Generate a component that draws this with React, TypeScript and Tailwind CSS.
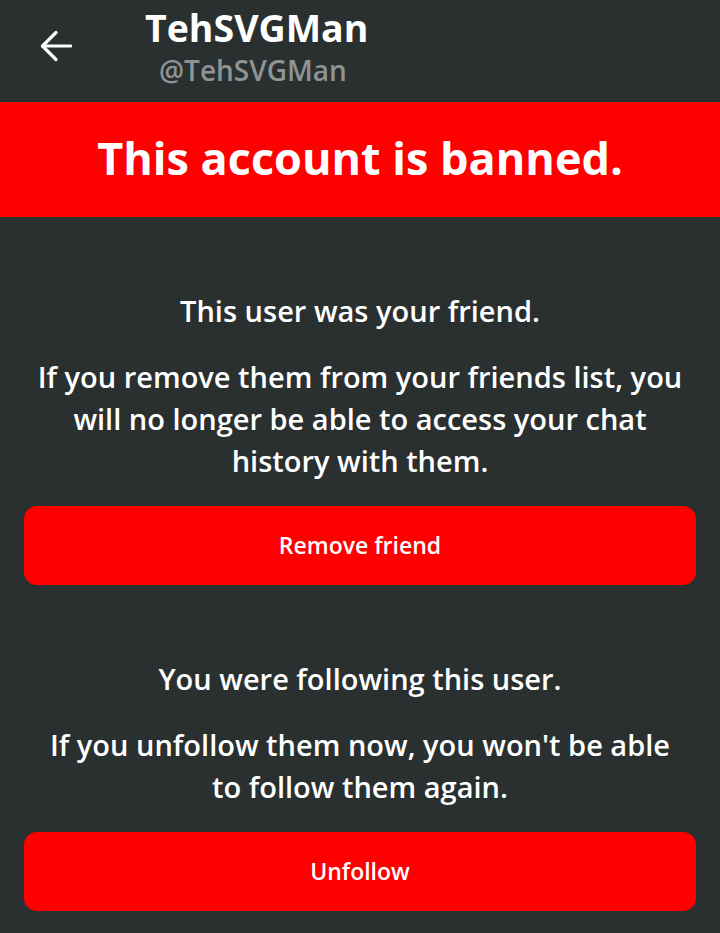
import React from "react";

export default function App() {
  return (
    <div className="w-[720px] h-[933px] bg-[#2a2f30] overflow-hidden" style={{ fontFamily: "'Open Sans', Lato, sans-serif" }}>
      <div className="h-[102px] flex items-start">
        <div className="w-[145px] pl-[40px] pt-[30px]">
          <svg width="32" height="32" viewBox="0 0 32 32" fill="none" stroke="white" strokeWidth="3.2" strokeLinecap="round" strokeLinejoin="round">
            <path d="M30.5 16H2.5" />
            <path d="M16 2.5L2.5 16L16 29.5" />
          </svg>
        </div>
        <div className="flex flex-col pt-[6px]">
          <div className="text-white font-bold text-[37.5px] leading-[44px]">TehSVGMan</div>
          <div className="text-[#8e9394] font-semibold text-[28px] leading-[32px] mt-[4px] pl-[14px]">@TehSVGMan</div>
        </div>
      </div>
      <div className="h-[115px] bg-[#ff0000] flex items-center justify-center pb-[3px]">
        <div className="text-white font-bold text-[45px]">This account is banned.</div>
      </div>
      <div className="px-[24px] pt-[73px] flex flex-col items-center text-white text-center">
        <div className="font-semibold text-[29px] leading-[42px]">This user was your friend.</div>
        <div className="mt-[24px] font-semibold text-[29px] leading-[42px]">
          If you remove them from your friends list, you will no longer be able to access your chat history with them.
        </div>
        <button className="mt-[24px] w-full h-[79px] bg-[#ff0000] rounded-[13px] text-white font-semibold text-[23px]">Remove friend</button>
        <div className="mt-[73px] font-semibold text-[29px] leading-[42px]">You were following this user.</div>
        <div className="mt-[24px] font-semibold text-[29px] leading-[42px] px-[16px]">
          If you unfollow them now, you won't be able to follow them again.
        </div>
        <button className="mt-[24px] w-full h-[79px] bg-[#ff0000] rounded-[13px] text-white font-semibold text-[23px]">Unfollow</button>
      </div>
    </div>
  );
}
